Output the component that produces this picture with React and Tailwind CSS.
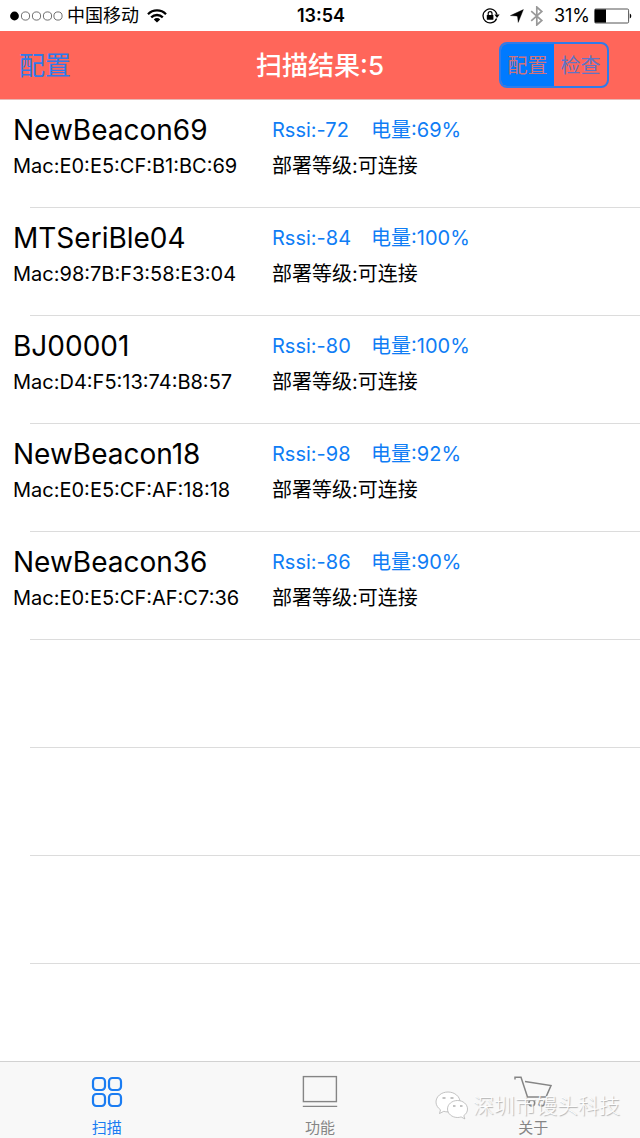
import React, { useState } from "react";

const devices = [
  { name: "NewBeacon69", mac: "E0:E5:CF:B1:BC:69", rssi: -72, battery: 69 },
  { name: "MTSeriBle04", mac: "98:7B:F3:58:E3:04", rssi: -84, battery: 100 },
  { name: "BJ00001", mac: "D4:F5:13:74:B8:57", rssi: -80, battery: 100 },
  { name: "NewBeacon18", mac: "E0:E5:CF:AF:18:18", rssi: -98, battery: 92 },
  { name: "NewBeacon36", mac: "E0:E5:CF:AF:C7:36", rssi: -86, battery: 90 },
];

const emptyRows = [1, 2, 3];

const StatusBar = () => (
  <div className="grid h-[31px] grid-cols-[1fr_auto_1fr] items-center pr-2 pl-2.5 text-lg leading-6 text-black">
    <div className="flex items-center">
      <svg width="53" height="10" viewBox="0 0 53 10" aria-hidden="true">
        <circle cx="4.5" cy="5" r="4.4" fill="#000" />
        {[15.5, 26.5, 37.5, 48].map((cx) => (
          <circle key={cx} cx={cx} cy="5" r="4.1" fill="none" stroke="#333" strokeWidth="0.7" />
        ))}
      </svg>
      <span className="ml-1">中国移动</span>
      <svg className="ml-2" width="20" height="14" viewBox="0 0 20 14" aria-hidden="true">
        <g fill="none" stroke="#000" strokeWidth="2.3">
          <path d="M1 5.2a12.7 12.7 0 0 1 18 0" />
          <path d="M4.2 8.4a8.2 8.2 0 0 1 11.6 0" />
        </g>
        <path d="M10 13.6 6.8 10.4a4.500 4.500 0 0 1 6.400 0z" fill="#000" />
      </svg>
    </div>
    <span className="font-semibold">13:54</span>
    <div className="flex items-center justify-end">
      <svg width="18" height="16" viewBox="0 0 18 16" aria-hidden="true">
        <path d="M14.6 10.4A7 7 0 1 1 14.9 6.5" fill="none" stroke="#000" strokeWidth="1.3" />
        <path d="M12.4 6.600h5.200L15 10z" fill="#000" />
        <rect x="4.8" y="7" width="6.6" height="4.8" rx="0.6" fill="#000" />
        <path d="M6.2 7V5.5a1.9 1.9 0 0 1 3.8 0V7" fill="none" stroke="#000" strokeWidth="1.2" />
      </svg>
      <svg className="ml-2.5" width="14" height="14" viewBox="0 0 14 14" aria-hidden="true">
        <path d="M13.4.6 8.200 13.400 7.600 7.800 6.400 6.900.4 6.600z" fill="#000" stroke="#000" strokeWidth="0.4" />
      </svg>
      <svg className="ml-1.5" width="14" height="20" viewBox="0 0 14 20" aria-hidden="true">
        <path
          d="m1.2 5.2 10.600 9.300L6.800 19V1l5 4.500L1.200 14.800"
          fill="none"
          stroke="#999"
          strokeWidth="1.7"
        />
      </svg>
      <span className="ml-2.5">31%</span>
      <svg className="ml-1" width="38" height="16" viewBox="0 0 38 16" aria-hidden="true">
        <rect x="0.6" y="1" width="34" height="14" rx="1.2" fill="none" stroke="#555" />
        <rect x="1" y="1.4" width="11" height="13.2" fill="#000" />
        <path d="M35.8 5.400a3 3 0 0 1 0 5.200z" fill="#000" />
      </svg>
    </div>
  </div>
);

const Header = ({ count, mode, onModeChange }) => (
  <header className="grid h-[69px] grid-cols-[1fr_auto_1fr] items-center border-b border-[#e8b8b4] bg-[#ff665a] px-[19px]">
    <button type="button" className="justify-self-start pt-0.5 text-[26px] leading-8 text-[#2f7bea]">
      配置
    </button>
    <h1 className="pt-0.5 text-[26px] leading-8 font-medium text-white">扫描结果:{count}</h1>
    <div className="mr-3 flex h-[46px] justify-self-end overflow-hidden rounded-lg border-2 border-[#2f7bea] text-xl">
      {["配置", "检查"].map((label) => (
        <button
          key={label}
          type="button"
          aria-pressed={mode === label}
          onClick={() => onModeChange(label)}
          className={
            mode === label
              ? "w-[53px] bg-[#007aff] pt-0.5 text-[#d0727c]"
              : "w-[53px] pt-0.5 text-[#5f74c4]"
          }
        >
          {label}
        </button>
      ))}
    </div>
  </header>
);

const DeviceRow = ({ device }) => (
  <li>
    <div className="grid h-[107px] grid-cols-[259px_99px_1fr] grid-rows-[36px_36px] items-center pt-3 pl-[13px] text-xl text-black">
      <h2 className="text-[28px] leading-9">{device.name}</h2>
      <span className="text-[#0f7df5]">Rssi:{device.rssi}</span>
      <span className="text-[#0f7df5]">电量:{device.battery}%</span>
      <span>Mac:{device.mac}</span>
      <span className="col-span-2">部署等级:可连接</span>
    </div>
    <div className="ml-[30px] h-px bg-[#dcdcdc]" />
  </li>
);

const ScanIcon = () => (
  <svg width="36" height="36" viewBox="0 0 36 36" fill="none" stroke="currentColor" strokeWidth="2.2">
    <rect x="4" y="4" width="12" height="12" rx="3.4" />
    <rect x="20" y="4" width="12" height="12" rx="3.4" />
    <rect x="4" y="20" width="12" height="12" rx="3.4" />
    <rect x="20" y="20" width="12" height="12" rx="3.4" />
  </svg>
);

const FeatureIcon = () => (
  <svg width="36" height="36" viewBox="0 0 36 36" fill="none" stroke="currentColor" strokeWidth="1.4">
    <rect x="1.4" y="2.6" width="33" height="25" />
    <path d="M.8 32.4h34.400" />
  </svg>
);

const CartIcon = () => (
  <svg width="40" height="36" viewBox="0 0 40 36" fill="none" stroke="currentColor" strokeWidth="1.5">
    <path d="M2 5.500V3.200h6L14.500 23h18.500L38 11.500 12 7.500" />
    <circle cx="18.8" cy="29" r="2.9" />
    <circle cx="28.6" cy="29" r="2.9" />
  </svg>
);

const tabs = [
  { label: "扫描", icon: ScanIcon },
  { label: "功能", icon: FeatureIcon },
  { label: "关于", icon: CartIcon },
];

const Watermark = () => (
  <div className="pointer-events-none absolute right-5 bottom-4 flex items-center gap-1 text-[21px] leading-8 font-light text-[#fdfdfd] [text-shadow:1px_1px_1px_#b0b0b0]">
    <svg width="34" height="30" viewBox="0 0 34 30" fill="#fff" stroke="#aaa" strokeWidth="0.7" aria-hidden="true">
      <path d="M13 1C6.400 1 1 5.500 1 11c0 3.200 1.800 5.900 4.500 7.800L4.500 22.500l4.300-2.200c1.300.4 2.700.6 4.200.6 6.600 0 12-4.400 12-9.900S19.600 1 13 1z" />
      <path d="M22.500 9.500C17 9.500 12.500 13.300 12.500 18s4.500 8.500 10 8.500c1.300 0 2.500-.2 3.600-.6l3.700 2-1-3.300c2.300-1.500 3.700-3.900 3.700-6.600 0-4.700-4.500-8.500-10-8.500z" />
      <g stroke="#888" strokeWidth="1.2">
        <path d="M7.500 7h3M15.500 7h3M18 15h2.500M25 15h2.500" />
      </g>
    </svg>
    <span>深圳市馒头科技</span>
  </div>
);

const TabBar = ({ active, onChange }) => (
  <nav className="relative grid h-[77px] grid-cols-3 border-t border-[#d2d2d2] bg-[#f8f8f8]">
    {tabs.map(({ label, icon: Icon }) => (
      <button
        key={label}
        type="button"
        onClick={() => onChange(label)}
        className={`flex flex-col items-center pt-3 text-[15px] leading-5 ${
          active === label ? "text-[#1a7cf2]" : "text-[#858585]"
        }`}
      >
        <Icon />
        <span className="mt-2">{label}</span>
      </button>
    ))}
    <Watermark />
  </nav>
);

const App = () => {
  const [mode, setMode] = useState("配置");
  const [tab, setTab] = useState("扫描");

  return (
    <div className="flex min-h-screen flex-col bg-white font-[Inter,'Noto_Sans_CJK_SC',sans-serif]">
      <StatusBar />
      <Header count={devices.length} mode={mode} onModeChange={setMode} />
      <main className="flex-1">
        <ul>
          {devices.map((device) => (
            <DeviceRow key={device.mac} device={device} />
          ))}
          {emptyRows.map((row) => (
            <li key={row} className="ml-[30px] h-[108px] border-b border-[#dcdcdc]" />
          ))}
        </ul>
      </main>
      <TabBar active={tab} onChange={setTab} />
    </div>
  );
};

export default App;
